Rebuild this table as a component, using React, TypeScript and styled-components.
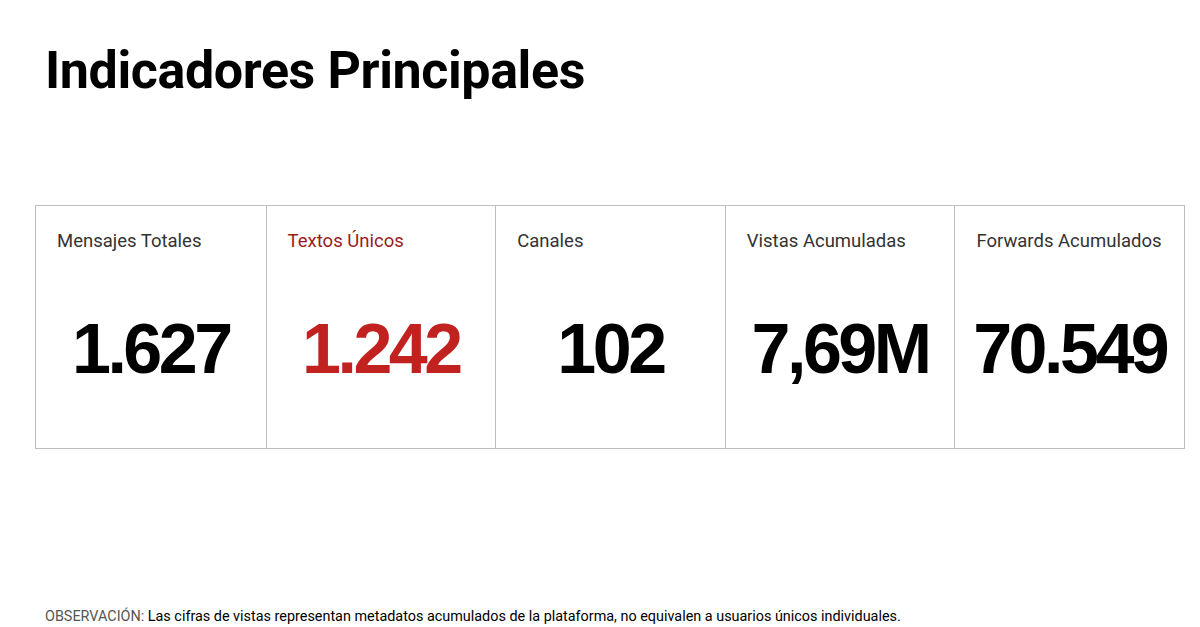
import styled, { createGlobalStyle } from "styled-components";

const GlobalStyle = createGlobalStyle`
  html, body {
    margin: 0;
    padding: 0;
    background: #ffffff;
  }
  * {
    box-sizing: border-box;
  }
`;

interface Indicator {
  label: string;
  value: string;
  highlight?: boolean;
}

const indicators: Indicator[] = [
  { label: "Mensajes Totales", value: "1.627" },
  { label: "Textos Únicos", value: "1.242", highlight: true },
  { label: "Canales", value: "102" },
  { label: "Vistas Acumuladas", value: "7,69M" },
  { label: "Forwards Acumulados", value: "70.549" },
];

export default function App(): JSX.Element {
  return (
    <StyledPage>
      <GlobalStyle />
      <StyledTitle>Indicadores Principales</StyledTitle>
      <StyledGrid>
        {indicators.map((item) => (
          <StyledCard key={item.label}>
            <StyledLabel $highlight={item.highlight}>{item.label}</StyledLabel>
            <StyledValue $highlight={item.highlight}>{item.value}</StyledValue>
          </StyledCard>
        ))}
      </StyledGrid>
      <StyledNote>
        <StyledNoteTag>OBSERVACIÓN:</StyledNoteTag> Las cifras de vistas
        representan metadatos acumulados de la plataforma, no equivalen a
        usuarios únicos individuales.
      </StyledNote>
    </StyledPage>
  );
}

const StyledPage = styled.div`
  height: 100vh;
  width: 100vw;
  display: flex;
  flex-direction: column;
  padding: 38px 15px 0 35px;
  font-family: Roboto, "Liberation Sans", sans-serif;
  color: #000;
  overflow: hidden;
`;

const StyledTitle = styled.h1`
  margin: 0 0 0 10px;
  font-size: 52px;
  font-weight: 700;
  line-height: 66px;
  letter-spacing: -0.4px;
`;

const StyledGrid = styled.section`
  display: grid;
  grid-template-columns: repeat(5, 1fr);
  width: 1150px;
  height: 244px;
  margin-top: 101px;
  border: 1.5px solid #bebebe;
`;

const StyledCard = styled.div`
  display: flex;
  flex-direction: column;
  padding: 23px 0 0 21px;
  & + & {
    border-left: 1.5px solid #bebebe;
  }
`;

const StyledLabel = styled.div<{ $highlight?: boolean }>`
  font-size: 18.5px;
  line-height: 24px;
  color: ${(props) => (props.$highlight ? "#9a1b1e" : "#333333")};
`;

const StyledValue = styled.div<{ $highlight?: boolean }>`
  flex: 1;
  display: flex;
  align-items: center;
  justify-content: center;
  margin-left: -21px;
  padding-bottom: 4px;
  font-family: "Liberation Sans", Arial, sans-serif;
  font-size: 70px;
  font-weight: 700;
  letter-spacing: -3.5px;
  color: ${(props) => (props.$highlight ? "#c1211f" : "#000000")};
`;

const StyledNote = styled.p`
  margin: auto 0 0 10px;
  padding-bottom: 0;
  font-size: 14.4px;
  line-height: 20px;
  color: #000;
`;

const StyledNoteTag = styled.span`
  color: #555555;
`;
